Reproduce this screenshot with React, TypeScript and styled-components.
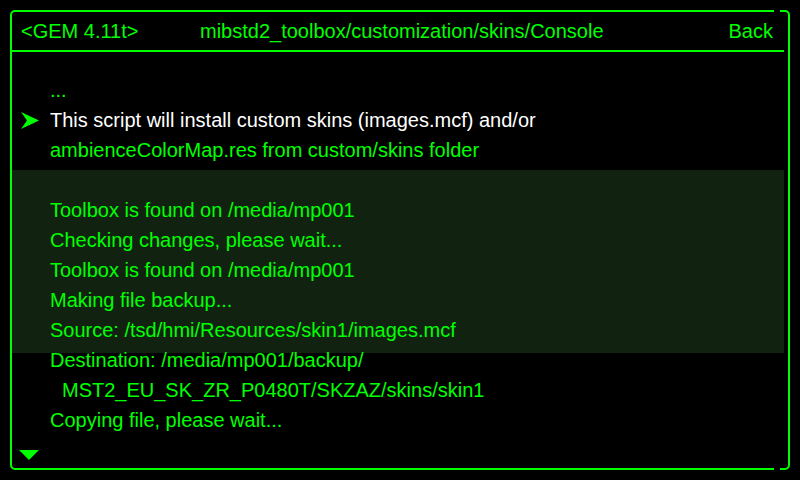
import React from "react";
import styled, { createGlobalStyle } from "styled-components";

const GREEN = "#00ff00";

const Global = createGlobalStyle`
  html, body { margin: 0; padding: 0; background: #000; }
  body { width: 800px; height: 480px; overflow: hidden; font-family: "Liberation Sans", Arial, sans-serif; }
`;

const Screen = styled.div`
  width: 800px;
  height: 480px;
  background: #000;
  padding: 10px;
  box-sizing: border-box;
`;

const Frame = styled.div`
  position: relative;
  height: 100%;
  border: 2px solid ${GREEN};
  border-radius: 5px;
  box-sizing: border-box;
  display: flex;
  flex-direction: column;
`;

const Notch = styled.div<{ $edge: "top" | "bottom" }>`
  position: absolute;
  right: 8px;
  ${(p) => (p.$edge === "top" ? "top: -2px;" : "bottom: -2px;")}
  width: 6px;
  height: 2px;
  background: #000;
`;

const Header = styled.div`
  height: 38px;
  margin-right: 4px;
  border-bottom: 2px solid ${GREEN};
  display: flex;
  align-items: center;
  padding: 0 11px 0 9px;
  color: ${GREEN};
  font-size: 20px;
  white-space: nowrap;
`;

const Version = styled.span`
  width: 179px;
`;

const Path = styled.span`
  flex: 1;
`;

const Body = styled.div`
  position: relative;
  flex: 1;
  padding-top: 23px;
`;

const Band = styled.div`
  position: absolute;
  left: 0;
  top: 118px;
  width: 772px;
  height: 183px;
  background: #112211;
`;

const Line = styled.div<{ $active?: boolean; $indent?: number }>`
  position: relative;
  display: grid;
  grid-template-columns: 38px 1fr;
  align-items: center;
  height: 30px;
  font-size: 20px;
  color: ${(p) => (p.$active ? "#ffffff" : GREEN)};
  white-space: pre;
  & > span:last-child {
    padding-left: ${(p) => p.$indent ?? 0}px;
  }
`;

const Marker = styled.span`
  display: flex;
  align-items: center;
  padding-left: 9px;
`;

const Footer = styled.div`
  padding: 15px 0 0 7px;
  display: flex;
`;

const Arrow = () => (
  <svg width="18" height="17" viewBox="0 0 18 17">
    <polygon points="0,0 18,8.5 0,17 6,8.5" fill={GREEN} />
  </svg>
);

const Down = () => (
  <svg width="20" height="10" viewBox="0 0 20 10">
    <polygon points="0,0 20,0 10,10" fill={GREEN} />
  </svg>
);

const lines: { text: string; active?: boolean; indent?: number }[] = [
  { text: "..." },
  { text: "This script will install custom skins (images.mcf) and/or", active: true },
  { text: "ambienceColorMap.res from custom/skins folder" },
  { text: "" },
  { text: "Toolbox is found on /media/mp001" },
  { text: "Checking changes, please wait..." },
  { text: "Toolbox is found on /media/mp001" },
  { text: "Making file backup..." },
  { text: "Source: /tsd/hmi/Resources/skin1/images.mcf" },
  { text: "Destination: /media/mp001/backup/" },
  { text: "MST2_EU_SK_ZR_P0480T/SKZAZ/skins/skin1", indent: 12 },
  { text: "Copying file, please wait..." },
];

export default function App() {
  return (
    <>
      <Global />
      <Screen>
        <Frame>
          <Notch $edge="top" />
          <Notch $edge="bottom" />
          <Header>
            <Version>&lt;GEM 4.11t&gt;</Version>
            <Path>mibstd2_toolbox/customization/skins/Console</Path>
            <span>Back</span>
          </Header>
          <Body>
            <Band />
            {lines.map((l, i) => (
              <Line key={i} $active={l.active} $indent={l.indent}>
                <Marker>{l.active ? <Arrow /> : null}</Marker>
                <span>{l.text}</span>
              </Line>
            ))}
            <Footer>
              <Down />
            </Footer>
          </Body>
        </Frame>
      </Screen>
    </>
  );
}
